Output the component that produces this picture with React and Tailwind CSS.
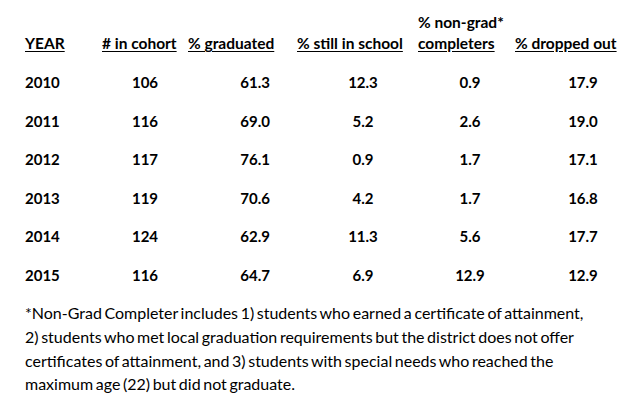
const rows = [
  ['2010', '106', '61.3', '12.3', '0.9', '17.9'],
  ['2011', '116', '69.0', '5.2', '2.6', '19.0'],
  ['2012', '117', '76.1', '0.9', '1.7', '17.1'],
  ['2013', '119', '70.6', '4.2', '1.7', '16.8'],
  ['2014', '124', '62.9', '11.3', '5.6', '17.7'],
  ['2015', '116', '64.7', '6.9', '12.9', '12.9'],
];

const cols = 'grid grid-cols-[77px_86px_109px_121px_97px_102px]';

export default function App() {
  return (
    <div className="w-[640px] h-[409px] bg-white text-black pl-[25px] font-['Lato',sans-serif]">
      {/* header */}
      <div className={`${cols} items-end pt-[12px] font-bold text-[15.5px] leading-[21px]`}>
        <span className="underline underline-offset-2">YEAR</span>
        <span className="underline underline-offset-2 whitespace-nowrap">
          # in cohort
        </span>
        <span className="underline underline-offset-2 whitespace-nowrap">
          % graduated
        </span>
        <span className="underline underline-offset-2 whitespace-nowrap">
          % still in school
        </span>
        <div className="flex flex-col whitespace-nowrap">
          <span>% non-grad*</span>
          <span className="underline underline-offset-2">completers</span>
        </div>
        <span className="underline underline-offset-2 whitespace-nowrap">
          % dropped out
        </span>
      </div>

      {/* rows */}
      <div className="mt-[9px] flex flex-col font-bold text-[15px]">
        {rows.map((r) => (
          <div key={r[0]} className={`${cols} h-[38.6px] items-center`}>
            <span>{r[0]}</span>
            <span className="text-center">{r[1]}</span>
            <span className="w-[82px] text-right">{r[2]}</span>
            <span className="pl-[11px] text-center">{r[3]}</span>
            <span className="pl-[7px] text-center">{r[4]}</span>
            <span className="pl-[34px] text-center">{r[5]}</span>
          </div>
        ))}
      </div>

      {/* footnote */}
      <div className="mt-[6.6px] flex flex-col text-[16px] leading-[23.7px] whitespace-nowrap [word-spacing:-1.5px]">
        <span>*Non-Grad Completer includes 1) students who earned a certificate of attainment,</span>
        <span>2) students who met local graduation requirements but the district does not offer</span>
        <span>certificates of attainment, and 3) students with special needs who reached the</span>
        <span>maximum age (22) but did not graduate.</span>
      </div>
    </div>
  );
}
